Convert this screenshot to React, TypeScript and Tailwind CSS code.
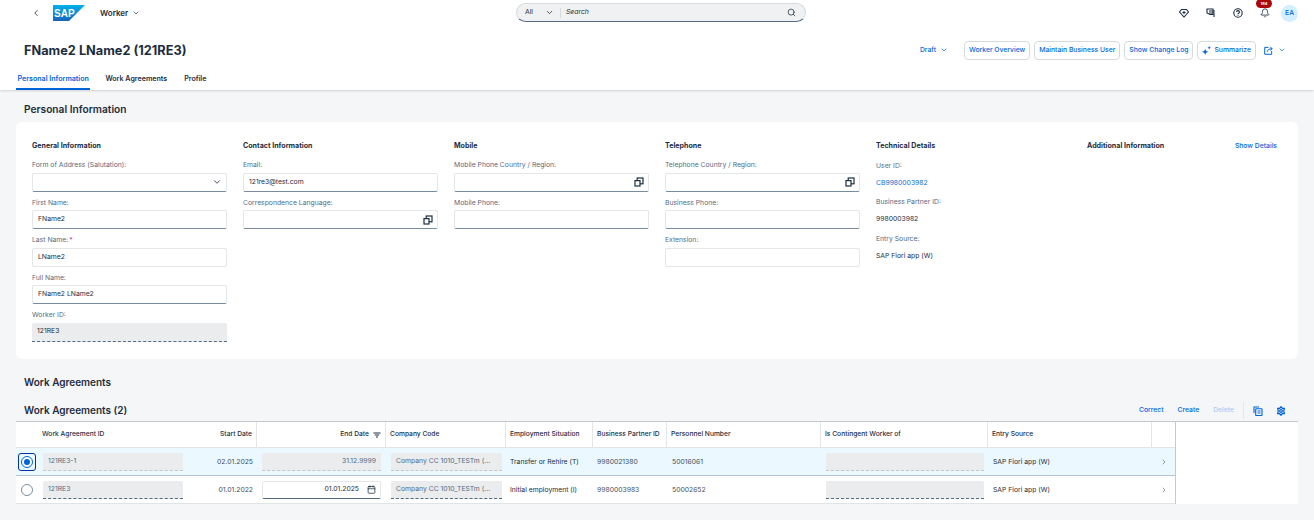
import { Bell, Calendar, ChevronDown, ChevronLeft, ChevronRight, Search } from 'lucide-react'

const font = "font-['Inter','Liberation_Sans',sans-serif]"

function ValueHelp() {
  return (
    <svg className="h-[10px] w-[10px] text-[#1d2d3e]" viewBox="0 0 10 10" fill="none" stroke="currentColor" strokeWidth="1.2">
      <rect x="3.2" y="1" width="5.8" height="5.8" />
      <rect x="1" y="3.6" width="5" height="5.4" fill="white" />
    </svg>
  )
}

function SapLogo() {
  return (
    <svg className="h-[16px] w-[32px]" viewBox="0 0 32 16">
      <defs>
        <linearGradient id="sapg" x1="0" y1="0" x2="0" y2="1">
          <stop offset="0" stopColor="#00b1eb" />
          <stop offset="1" stopColor="#1765b8" />
        </linearGradient>
      </defs>
      <polygon points="0,0 32,0 16,16 0,16" fill="url(#sapg)" />
      <text x="1" y="11.5" fontSize="10" fontWeight="700" fill="white" fontFamily="Liberation Sans">SAP</text>
    </svg>
  )
}

function Field({ label, value, kind = 'edit', required, light }: { label: string; value?: string; kind?: 'edit' | 'select' | 'help' | 'read'; required?: boolean; light?: boolean }) {
  const dark = kind === 'select' || kind === 'help'
  return (
    <div className="flex flex-col">
      <div className="flex h-[15px] items-center pt-[1px] text-[6.8px] text-[#556b82]">
        {label}
        {required && <span className="ml-[1px] text-[#c0399f]">*</span>}
      </div>
      {kind === 'read' ? (
        <div className="flex h-[19px] items-center rounded-t-[2px] border-b border-dashed border-[#556b82] bg-[#eaecee] pl-[5px] pr-[4px] text-[6.8px] text-[#1d2d3e]">
          {value}
        </div>
      ) : (
        <div
          className={`flex h-[19px] items-center justify-between rounded-[2px] border border-[#e3e7ea] bg-white pl-[5px] pr-[4px] text-[6.8px] text-[#1d2d3e] ${
            (dark || value) && !light ? 'border-b-[#7a8da0]' : ''
          }`}
        >
          <span>{value}</span>
          {kind === 'select' && <ChevronDown className="h-[10px] w-[10px]" strokeWidth={2} />}
          {kind === 'help' && <ValueHelp />}
        </div>
      )}
    </div>
  )
}

function Heading({ children }: { children: string }) {
  return <div className="flex h-[16px] items-center text-[7.1px] font-bold text-[#1d2d3e]">{children}</div>
}

function Info({ label, value, link }: { label: string; value: string; link?: boolean }) {
  return (
    <div className="flex h-[36.5px] flex-col">
      <div className="flex h-[15px] items-center text-[6.8px] text-[#556b82]">{label}</div>
      <div className={`flex h-[19px] items-center text-[6.8px] ${link ? 'text-[#0a6ed1]' : 'text-[#1d2d3e]'}`}>{value}</div>
    </div>
  )
}

function HeaderButton({ children }: { children: React.ReactNode }) {
  return (
    <button className="flex h-[19px] items-center gap-[3px] rounded-[4px] border border-[#d5dadd] bg-white px-[4px] text-[6.8px] font-medium text-[#0064d9]">
      {children}
    </button>
  )
}

const tableCols = 'grid grid-cols-[22px_149px_70px_129px_120px_87px_74px_154px_167px_164px_23px]'

function HeaderCell({ children, right, line = true }: { children?: React.ReactNode; right?: boolean; line?: boolean }) {
  return (
    <div className={`flex items-center gap-[4px] whitespace-nowrap px-[4px] text-[6.7px] font-medium text-[#1d2d3e] ${right ? 'justify-end' : ''} ${line ? 'border-r border-[#e5e5e5]' : ''}`}>
      {children}
    </div>
  )
}

function ReadCell({ value, right, dashed, className }: { value?: string; right?: boolean; dashed?: boolean; className?: string }) {
  return (
    <div className={`flex h-[18px] items-center whitespace-nowrap rounded-t-[2px] border-b border-dashed bg-[#eaecee] px-[5px] text-[6.8px] text-[#556b82] ${dashed ? 'border-[#556b82]' : 'border-[#c4c9ce]'} ${right ? 'justify-end' : ''} ${className ?? ''}`}>
      {value}
    </div>
  )
}

function Row({ selected, id, start, company, situation, partner, personnel }: { selected?: boolean; id: string; start: string; company: string; situation: string; partner: string; personnel: string }) {
  const text = 'flex items-center whitespace-nowrap px-[4px] pt-[1px] text-[6.8px] text-[#1d2d3e]'
  return (
    <div className={`${tableCols} h-[28px] border-b ${selected ? 'border-[#b4c6d6] bg-[#ebf8ff]' : 'border-[#e1e4e7] bg-white'}`}>
      <div className="flex items-center justify-center">
        {selected ? (
          <div className="flex h-[18px] w-[18px] items-center justify-center rounded-[3px] border-[1.5px] border-[#0032a5]">
            <div className="flex h-[12px] w-[12px] items-center justify-center rounded-full border border-[#0064d9] bg-white">
              <div className="h-[6px] w-[6px] rounded-full bg-[#0064d9]" />
            </div>
          </div>
        ) : (
          <div className="h-[12px] w-[12px] rounded-full border border-[#7a8da0] bg-white" />
        )}
      </div>
      <div className="flex items-center pl-[5px] pr-[4px]">
        <ReadCell value={id} dashed={!selected} className="w-full" />
      </div>
      <div className={`${text} justify-end !text-[#3f5161]`}>{start}</div>
      <div className="flex items-center px-[5px]">
        {selected ? (
          <ReadCell value="31.12.9999" right className="w-full" />
        ) : (
          <div className="flex h-[18px] w-full items-center justify-end gap-[8px] rounded-[2px] border border-[#e3e7ea] border-b-[#556b82] bg-white px-[4px] text-[6.8px] text-[#1d2d3e]">
            01.01.2025
            <Calendar className="h-[9px] w-[9px]" strokeWidth={2} />
          </div>
        )}
      </div>
      <div className="flex items-center pl-[5px] pr-[4px]">
        <ReadCell value={company} dashed={!selected} className="w-full" />
      </div>
      <div className={text}>{situation}</div>
      <div className={`${text} !text-[#3f5161]`}>{partner}</div>
      <div className={`${text} pl-[5px] !text-[#3f5161]`}>{personnel}</div>
      <div className="flex items-center pl-[5px] pr-[4px]">
        <ReadCell dashed={!selected} className="w-full" />
      </div>
      <div className={`${text} pl-[5px]`}>SAP Fiori app (W)</div>
      <div className="flex items-center justify-center">
        <ChevronRight className="h-[8px] w-[8px] text-[#556b82]" strokeWidth={2} />
      </div>
    </div>
  )
}

export default function App() {
  return (
    <div className={`${font} h-[520px] w-[1314px] overflow-hidden bg-[#f5f6f7] antialiased`}>
      <div className="h-[90px] bg-white shadow-[0_1px_2px_rgba(0,0,0,0.15)]">
        {/* shell bar */}
        <div className="relative flex h-[26px] items-center pl-[31px] pr-[16px]">
          <ChevronLeft className="h-[10px] w-[10px] text-[#1d2d3e]" strokeWidth={2} />
          <div className="ml-[12px] flex"><SapLogo /></div>
          <div className="ml-[15px] flex items-center gap-[4px] text-[8px] font-semibold text-[#1d2d3e]">
            Worker <ChevronDown className="h-[8px] w-[8px]" strokeWidth={2} />
          </div>
          <div className="absolute left-[516px] top-[3px] flex h-[19px] w-[290px] items-center rounded-full border border-[#d5dadd] border-b-[#556b82] bg-[#eff1f2] pl-[8px] pr-[9px] text-[6.8px] text-[#1d2d3e]">
            <span className="w-[20px]">All</span>
            <ChevronDown className="h-[9px] w-[9px]" strokeWidth={2} />
            <div className="ml-[6px] mr-[5px] h-[10px] w-px bg-[#d5dadd]" />
            <span className="flex-1 italic text-[#1d2d3e]">Search</span>
            <Search className="h-[9px] w-[9px]" strokeWidth={2} />
          </div>
          <div className="ml-auto flex items-center">
            <svg className="h-[10px] w-[10px] text-[#1d2d3e]" viewBox="0 0 10 10" fill="none" stroke="currentColor" strokeWidth="1.1">
              <path d="M2.5 1.5h5l2 2.5L5 9 .5 4z" />
              <path d="M5 3v3M3.5 4.5h3" />
            </svg>
            <svg className="ml-[17px] h-[10px] w-[10px] text-[#1d2d3e]" viewBox="0 0 10 10" fill="none" stroke="currentColor" strokeWidth="1.1">
              <path d="M1 1h6v5.5H4L1 5z" />
              <path d="M3 3h6M3 5h6M8 6v3" />
            </svg>
            <svg className="ml-[17px] h-[10px] w-[10px] text-[#1d2d3e]" viewBox="0 0 10 10" fill="none" stroke="currentColor" strokeWidth="1.1">
              <circle cx="5" cy="5" r="4.2" />
              <path d="M3.6 4a1.4 1.4 0 1 1 2 1.3c-.4.2-.6.5-.6 1M5 7v.8" />
            </svg>
            <div className="relative ml-[17px]">
              <Bell className="h-[10px] w-[10px] text-[#1d2d3e]" strokeWidth={2} />
              <div className="absolute -top-[9px] left-[-4px] flex h-[9px] w-[16px] items-center justify-center rounded-full bg-[#aa0808] text-[4px] font-bold text-white">184</div>
            </div>
            <div className="ml-[11px] flex h-[17px] w-[17px] items-center justify-center rounded-full bg-[#d1efff] text-[6.8px] font-medium text-[#0064d9]">EA</div>
          </div>
        </div>

        {/* title row */}
        <div className="flex h-[40px] items-center pl-[24px] pr-[28px] pt-[8px]">
          <h1 className="pt-[2px] text-[12.75px] font-bold text-[#1d2d3e]">FName2 LName2 (121RE3)</h1>
          <div className="ml-auto flex items-center gap-[4px]">
            <div className="mr-[12px] flex items-center gap-[4px] text-[6.8px] font-medium text-[#0064d9]">
              Draft <ChevronDown className="h-[8px] w-[8px]" strokeWidth={2} />
            </div>
            <HeaderButton>Worker Overview</HeaderButton>
            <HeaderButton>Maintain Business User</HeaderButton>
            <HeaderButton>Show Change Log</HeaderButton>
            <HeaderButton>
              <svg className="h-[9px] w-[9px]" viewBox="0 0 10 10" fill="currentColor">
                <path d="M3.5 3l1 2.5L7 6.5 4.5 7.5 3.5 10l-1-2.5L0 6.5l2.5-1zM8 0l.6 1.4L10 2l-1.4.6L8 4l-.6-1.4L6 2l1.4-.6z" />
              </svg>
              Summarize
            </HeaderButton>
            <div className="ml-[4px] flex items-center gap-[5px] text-[#0064d9]">
              <svg className="h-[9px] w-[9px]" viewBox="0 0 10 10" fill="none" stroke="currentColor" strokeWidth="1.1">
                <path d="M5 1.5H.8v7.7h7.7V5.5M3.5 6.5C4 4 6 3 9 3M7 1l2 2-2 2" />
              </svg>
              <ChevronDown className="h-[8px] w-[8px]" strokeWidth={2} />
            </div>
          </div>
        </div>

        {/* tabs */}
        <div className="flex h-[24px] pl-[16px] text-[7.1px] font-semibold text-[#1d2d3e]">
          <div className="flex items-center border-b-[2px] border-[#0064d9] px-[1.5px] pt-[4px] text-[#0064d9]">Personal Information</div>
          <div className="ml-[15px] flex items-center border-b-[2px] border-transparent pt-[4px]">Work Agreements</div>
          <div className="ml-[17px] flex items-center border-b-[2px] border-transparent pt-[4px]">Profile</div>
        </div>
      </div>

      <h2 className="flex h-[32px] items-center pl-[24px] pt-[8px] text-[10.2px] font-semibold text-[#1d2d3e]">Personal Information</h2>

      {/* form card */}
      <section className="mx-[16px] grid h-[237px] grid-cols-6 gap-x-[16px] rounded-[6px] bg-white px-[16px] pt-[16px]">
        <div className="flex flex-col gap-[3.5px]">
          <Heading>General Information</Heading>
          <Field label="Form of Address (Salutation):" kind="select" />
          <Field label="First Name:" value="FName2" />
          <Field label="Last Name:" value="LName2" required light />
          <Field label="Full Name:" value="FName2 LName2" />
          <Field label="Worker ID:" value="121RE3" kind="read" />
        </div>
        <div className="flex flex-col gap-[3.5px]">
          <Heading>Contact Information</Heading>
          <Field label="Email:" value="121re3@test.com" />
          <Field label="Correspondence Language:" kind="help" />
        </div>
        <div className="flex flex-col gap-[3.5px]">
          <Heading>Mobile</Heading>
          <Field label="Mobile Phone Country / Region:" kind="help" />
          <Field label="Mobile Phone:" value=" " />
        </div>
        <div className="flex flex-col gap-[3.5px]">
          <Heading>Telephone</Heading>
          <Field label="Telephone Country / Region:" kind="help" />
          <Field label="Business Phone:" value=" " />
          <Field label="Extension:" />
        </div>
        <div className="flex flex-col">
          <Heading>Technical Details</Heading>
          <div className="pt-[4.5px]">
            <Info label="User ID:" value="CB9980003982" link />
            <Info label="Business Partner ID:" value="9980003982" />
            <Info label="Entry Source:" value="SAP Fiori app (W)" />
          </div>
        </div>
        <div className="flex h-[16px] items-center justify-between pr-[5px]">
          <span className="text-[7.1px] font-bold text-[#1d2d3e]">Additional Information</span>
          <span className="text-[6.8px] font-medium text-[#0064d9]">Show Details</span>
        </div>
      </section>

      <h2 className="mt-[15px] flex h-[16px] items-center pl-[24px] text-[10px] font-semibold text-[#1d2d3e]">Work Agreements</h2>

      {/* table toolbar */}
      <div className="mx-[16px] mt-[12px] flex h-[17px] items-center pl-[8px] pr-[12px]">
        <h2 className="text-[10px] font-semibold text-[#1d2d3e]">Work Agreements (2)</h2>
        <div className="ml-auto flex items-center text-[6.8px] font-medium text-[#0064d9]">
          <span>Correct</span>
          <span className="ml-[14px]">Create</span>
          <span className="ml-[14px] text-[#a9cdf3]">Delete</span>
          <div className="ml-[9px] h-[17px] w-px bg-[#e3e7ea]" />
          <svg className="ml-[9px] h-[10px] w-[10px]" viewBox="0 0 10 10" fill="none" stroke="currentColor" strokeWidth="1.1">
            <path d="M1 7V1h5" />
            <rect x="2.7" y="2.7" width="6.3" height="6.8" rx=".6" />
            <path d="M4.5 5h3M4.5 7h3" />
          </svg>
          <svg className="ml-[13px] h-[10px] w-[10px]" viewBox="0 0 10 10" fill="none" stroke="currentColor" strokeWidth="1.3">
            <path d="M5 .8l1.3 1.5h2l-.5 2.7.5 2.7h-2L5 9.2 3.700 7.700h-2L2.200 5l-.5-2.700h2z" />
            <circle cx="5" cy="5" r="1.3" />
          </svg>
        </div>
      </div>

      {/* table */}
      <div className="mx-[16px] mt-[2px] flex border-t border-[#c4c9ce]">
        <div className="border-r border-[#c4c9ce]">
          <div className={`${tableCols} h-[26px] border-b border-[#e1e4e7] bg-white`}>
            <HeaderCell line={false} />
            <HeaderCell line={false}>Work Agreement ID</HeaderCell>
            <HeaderCell right>Start Date</HeaderCell>
            <HeaderCell right>
              End Date
              <svg className="h-[8px] w-[8px] text-[#1d2d3e]" viewBox="0 0 8 8" fill="none" stroke="currentColor" strokeWidth="1">
                <path d="M.5 2h7M1.8 4h4.4M3 6h2" />
              </svg>
            </HeaderCell>
            <HeaderCell>Company Code</HeaderCell>
            <HeaderCell>Employment Situation</HeaderCell>
            <HeaderCell>Business Partner ID</HeaderCell>
            <HeaderCell>Personnel Number</HeaderCell>
            <HeaderCell>Is Contingent Worker of</HeaderCell>
            <HeaderCell>Entry Source</HeaderCell>
            <HeaderCell line={false} />
          </div>
          <Row selected id="121RE3-1" start="02.01.2025" company="Company CC 1010_TESTm (..." situation="Transfer or Rehire (T)" partner="9980021380" personnel="50016061" />
          <Row id="121RE3" start="01.01.2022" company="Company CC 1010_TESTm (..." situation="Initial employment (I)" partner="9980003983" personnel="50002652" />
        </div>
        <div className="flex-1 bg-white" />
      </div>
    </div>
  )
}
